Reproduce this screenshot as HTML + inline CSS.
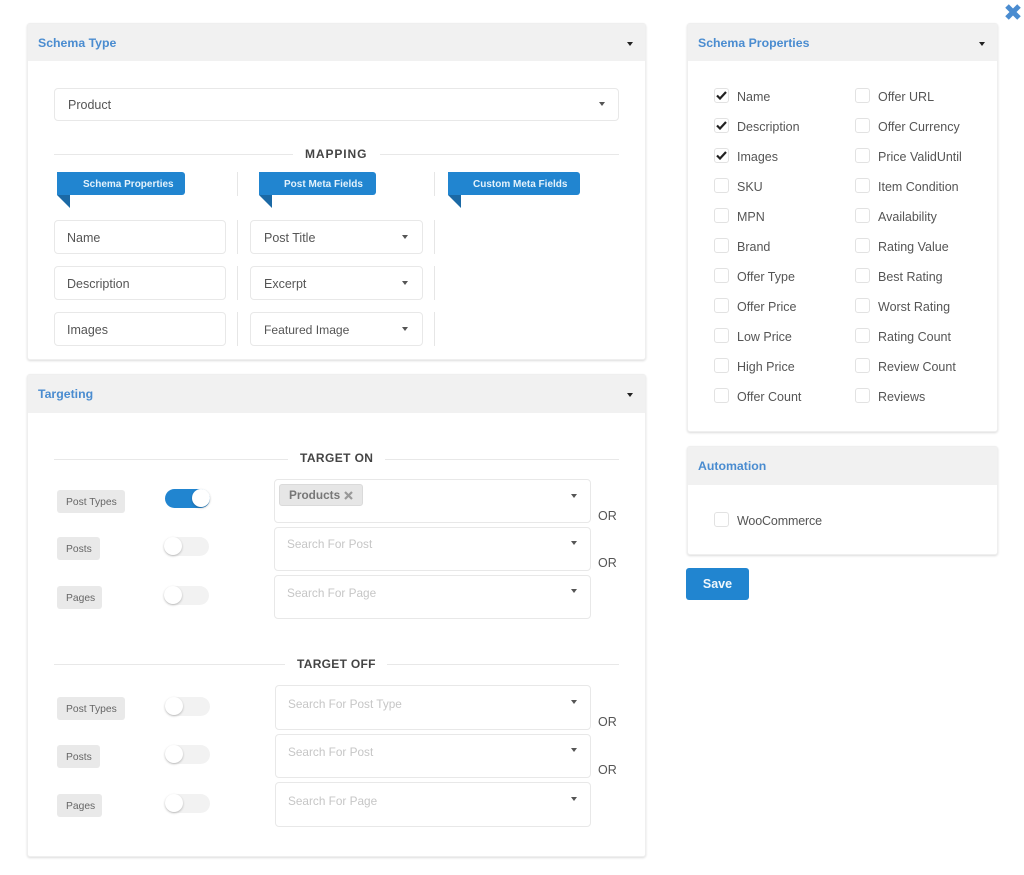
<!DOCTYPE html>
<html><head><meta charset="utf-8"><style>
html,body{margin:0;padding:0;background:#fff}
#r{position:relative;width:1024px;height:875px;overflow:hidden;font-family:"Liberation Sans",sans-serif;font-size:12.5px;color:#555;filter:blur(.35px)}
#r div,#r span{position:absolute;box-sizing:border-box}
.p{background:#fff;border-radius:3px;border:1px solid #efefef;box-shadow:0 1px 2px rgba(0,0,0,.14)}
.h{background:#f1f1f1}
.ht{color:#4a8cd0;font-weight:bold;font-size:12.3px;line-height:16px;white-space:nowrap;margin-top:1px}
.t{white-space:nowrap;line-height:16px;margin-top:1px}
.b{border:1px solid #e8e8e8;border-radius:4px;background:#fff}
.a{width:0;height:0;border-left:3.5px solid transparent;border-right:3.5px solid transparent;border-top:4px solid #555}
.l{height:1px;background:#e8e8e8}
.v{width:1px;background:#e6e6e6}
.s{font-weight:bold;color:#444;letter-spacing:.9px;line-height:16px;white-space:nowrap;font-size:12px}
.rb{background:#2185d0;border-radius:0 3px 3px 0;height:23px;color:#e4f2fb;font-weight:bold;font-size:10px;line-height:25px;white-space:nowrap}
.f{width:0;height:0;border-top:13px solid #1b69a5;border-left:13px solid transparent}
.g{background:#e9e9e9;border-radius:3px;height:23px;color:#666;font-size:10.3px;line-height:25px;padding-left:9px;white-space:nowrap}
.o{width:45px;height:19px;background:#f2f2f2;border-radius:10px}
.k{width:18px;height:18px;border-radius:50%;background:#fff;box-shadow:0 1px 2px rgba(0,0,0,.25);left:0;top:0}
.c{width:15px;height:15px;border:1px solid #e2e2e2;border-radius:3px;background:#fff}
.ph{color:#c6c6c6;white-space:nowrap;line-height:16px;margin-top:1px;font-size:11.8px}
</style></head><body><div id="r">

<svg style="position:absolute;left:1004px;top:3px" width="18" height="18" viewBox="0 0 18 18"><path d="M3 3 L15 15 M15 3 L3 15" stroke="#4a8cd0" stroke-width="5" fill="none"/></svg>

<!-- Schema Type -->
<div class="p" style="left:27px;top:23px;width:619px;height:337px"></div>
<div class="h" style="left:28px;top:24px;width:617px;height:37px"></div>
<div class="ht" style="left:38px;top:34px">Schema Type</div>
<div class="a" style="left:627px;top:42px;border-top-color:#222"></div>

<div class="b" style="left:54px;top:88px;width:565px;height:33px"></div>
<div class="t" style="left:68px;top:96px">Product</div>
<div class="a" style="left:599px;top:102px"></div>

<div class="l" style="left:54px;top:154px;width:239px"></div>
<div class="s" style="left:305px;top:146px">MAPPING</div>
<div class="l" style="left:380px;top:154px;width:239px"></div>

<div class="rb" style="left:57px;top:172px;width:128px;padding-left:26px">Schema Properties</div>
<div class="f" style="left:57px;top:195px"></div>
<div class="v" style="left:237px;top:172px;height:24px"></div>
<div class="rb" style="left:259px;top:172px;width:117px;padding-left:25px">Post Meta Fields</div>
<div class="f" style="left:259px;top:195px"></div>
<div class="v" style="left:434px;top:172px;height:24px"></div>
<div class="rb" style="left:448px;top:172px;width:132px;padding-left:25px">Custom Meta Fields</div>
<div class="f" style="left:448px;top:195px"></div>

<div class="b" style="left:54px;top:220px;width:172px;height:34px"></div>
<div class="t" style="left:67px;top:229px">Name</div>
<div class="v" style="left:237px;top:220px;height:34px"></div>
<div class="b" style="left:250px;top:220px;width:173px;height:34px"></div>
<div class="t" style="left:264px;top:229px">Post Title</div>
<div class="a" style="left:402px;top:235px"></div>
<div class="v" style="left:434px;top:220px;height:34px"></div>

<div class="b" style="left:54px;top:266px;width:172px;height:34px"></div>
<div class="t" style="left:67px;top:275px">Description</div>
<div class="v" style="left:237px;top:266px;height:34px"></div>
<div class="b" style="left:250px;top:266px;width:173px;height:34px"></div>
<div class="t" style="left:264px;top:275px">Excerpt</div>
<div class="a" style="left:402px;top:281px"></div>
<div class="v" style="left:434px;top:266px;height:34px"></div>

<div class="b" style="left:54px;top:312px;width:172px;height:34px"></div>
<div class="t" style="left:67px;top:321px">Images</div>
<div class="v" style="left:237px;top:312px;height:34px"></div>
<div class="b" style="left:250px;top:312px;width:173px;height:34px"></div>
<div class="t" style="left:264px;top:321px;font-size:12.1px">Featured Image</div>
<div class="a" style="left:402px;top:327px"></div>
<div class="v" style="left:434px;top:312px;height:34px"></div>

<!-- Targeting -->
<div class="p" style="left:27px;top:374px;width:619px;height:483px"></div>
<div class="h" style="left:28px;top:375px;width:617px;height:38px"></div>
<div class="ht" style="left:38px;top:385px">Targeting</div>
<div class="a" style="left:627px;top:393px;border-top-color:#222"></div>

<div class="l" style="left:54px;top:459px;width:234px"></div>
<div class="s" style="left:300px;top:450px;letter-spacing:.4px">TARGET ON</div>
<div class="l" style="left:385px;top:459px;width:234px"></div>

<div class="g" style="left:57px;top:490px;width:68px">Post Types</div>
<div class="g" style="left:57px;top:537px;width:43px">Posts</div>
<div class="g" style="left:57px;top:586px;width:45px">Pages</div>

<div class="o" style="left:165px;top:489px;background:#2185d0;width:45px"><div class="k" style="left:27px"></div></div>
<div class="o" style="left:164px;top:537px"><div class="k"></div></div>
<div class="o" style="left:164px;top:586px"><div class="k"></div></div>

<div class="b" style="left:274px;top:479px;width:317px;height:44px"></div>
<div style="left:279px;top:484px;width:84px;height:22px;background:#e6e6e6;border:1px solid #dadada;border-radius:3px"></div>
<div class="t" style="left:289px;top:486px;font-weight:bold;color:#777;font-size:11.8px">Products</div>
<svg style="position:absolute;left:344px;top:491px" width="9" height="9" viewBox="0 0 9 9"><path d="M1 1 L8 8 M8 1 L1 8" stroke="#999" stroke-width="2.2"/></svg>
<div class="a" style="left:571px;top:494px"></div>
<div class="b" style="left:274px;top:527px;width:317px;height:44px"></div>
<div class="ph" style="left:287px;top:535px">Search For Post</div>
<div class="a" style="left:571px;top:541px"></div>
<div class="b" style="left:274px;top:575px;width:317px;height:44px"></div>
<div class="ph" style="left:287px;top:584px">Search For Page</div>
<div class="a" style="left:571px;top:589px"></div>
<div class="t" style="left:598px;top:507px">OR</div>
<div class="t" style="left:598px;top:554px">OR</div>

<div class="l" style="left:54px;top:664px;width:231px"></div>
<div class="s" style="left:297px;top:656px;letter-spacing:.3px">TARGET OFF</div>
<div class="l" style="left:387px;top:664px;width:232px"></div>

<div class="g" style="left:57px;top:697px;width:68px">Post Types</div>
<div class="g" style="left:57px;top:745px;width:43px">Posts</div>
<div class="g" style="left:57px;top:794px;width:45px">Pages</div>

<div class="o" style="left:165px;top:697px"><div class="k"></div></div>
<div class="o" style="left:165px;top:745px"><div class="k"></div></div>
<div class="o" style="left:165px;top:794px"><div class="k"></div></div>

<div class="b" style="left:275px;top:685px;width:316px;height:45px"></div>
<div class="ph" style="left:288px;top:695px">Search For Post Type</div>
<div class="a" style="left:571px;top:700px"></div>
<div class="b" style="left:275px;top:734px;width:316px;height:44px"></div>
<div class="ph" style="left:288px;top:743px">Search For Post</div>
<div class="a" style="left:571px;top:748px"></div>
<div class="b" style="left:275px;top:782px;width:316px;height:45px"></div>
<div class="ph" style="left:288px;top:792px">Search For Page</div>
<div class="a" style="left:571px;top:797px"></div>
<div class="t" style="left:598px;top:713px">OR</div>
<div class="t" style="left:598px;top:761px">OR</div>

<!-- Schema Properties -->
<div class="p" style="left:687px;top:23px;width:311px;height:409px"></div>
<div class="h" style="left:688px;top:24px;width:309px;height:37px"></div>
<div class="ht" style="left:698px;top:34px">Schema Properties</div>
<div class="a" style="left:979px;top:42px;border-top-color:#222"></div>

<div class="c" style="left:714px;top:88px"></div><svg style="position:absolute;left:716px;top:91px" width="11" height="9" viewBox="0 0 11 9"><path d="M1 4.5 L4 7.5 L10 1" stroke="#222" stroke-width="2.2" fill="none"/></svg><div class="t" style="left:737px;top:88px">Name</div>
<div class="c" style="left:714px;top:118px"></div><svg style="position:absolute;left:716px;top:121px" width="11" height="9" viewBox="0 0 11 9"><path d="M1 4.5 L4 7.5 L10 1" stroke="#222" stroke-width="2.2" fill="none"/></svg><div class="t" style="left:737px;top:118px">Description</div>
<div class="c" style="left:714px;top:148px"></div><svg style="position:absolute;left:716px;top:151px" width="11" height="9" viewBox="0 0 11 9"><path d="M1 4.5 L4 7.5 L10 1" stroke="#222" stroke-width="2.2" fill="none"/></svg><div class="t" style="left:737px;top:148px">Images</div>
<div class="c" style="left:714px;top:178px"></div><div class="t" style="left:737px;top:178px">SKU</div>
<div class="c" style="left:714px;top:208px"></div><div class="t" style="left:737px;top:208px">MPN</div>
<div class="c" style="left:714px;top:238px"></div><div class="t" style="left:737px;top:238px">Brand</div>
<div class="c" style="left:714px;top:268px"></div><div class="t" style="left:737px;top:268px">Offer Type</div>
<div class="c" style="left:714px;top:298px"></div><div class="t" style="left:737px;top:298px">Offer Price</div>
<div class="c" style="left:714px;top:328px"></div><div class="t" style="left:737px;top:328px">Low Price</div>
<div class="c" style="left:714px;top:358px"></div><div class="t" style="left:737px;top:358px">High Price</div>
<div class="c" style="left:714px;top:388px"></div><div class="t" style="left:737px;top:388px">Offer Count</div>

<div class="c" style="left:855px;top:88px"></div><div class="t" style="left:878px;top:88px">Offer URL</div>
<div class="c" style="left:855px;top:118px"></div><div class="t" style="left:878px;top:118px">Offer Currency</div>
<div class="c" style="left:855px;top:148px"></div><div class="t" style="left:878px;top:148px">Price ValidUntil</div>
<div class="c" style="left:855px;top:178px"></div><div class="t" style="left:878px;top:178px">Item Condition</div>
<div class="c" style="left:855px;top:208px"></div><div class="t" style="left:878px;top:208px">Availability</div>
<div class="c" style="left:855px;top:238px"></div><div class="t" style="left:878px;top:238px">Rating Value</div>
<div class="c" style="left:855px;top:268px"></div><div class="t" style="left:878px;top:268px">Best Rating</div>
<div class="c" style="left:855px;top:298px"></div><div class="t" style="left:878px;top:298px">Worst Rating</div>
<div class="c" style="left:855px;top:328px"></div><div class="t" style="left:878px;top:328px">Rating Count</div>
<div class="c" style="left:855px;top:358px"></div><div class="t" style="left:878px;top:358px">Review Count</div>
<div class="c" style="left:855px;top:388px"></div><div class="t" style="left:878px;top:388px">Reviews</div>

<!-- Automation -->
<div class="p" style="left:687px;top:446px;width:311px;height:109px"></div>
<div class="h" style="left:688px;top:447px;width:309px;height:38px"></div>
<div class="ht" style="left:698px;top:457px">Automation</div>
<div class="c" style="left:714px;top:512px"></div>
<div class="t" style="left:737px;top:512px;letter-spacing:-.15px">WooCommerce</div>

<div style="left:686px;top:568px;width:63px;height:32px;background:#2185d0;border-radius:3px;color:#f0f7fc;font-weight:bold;text-align:center;line-height:33px">Save</div>

</div></body></html>
